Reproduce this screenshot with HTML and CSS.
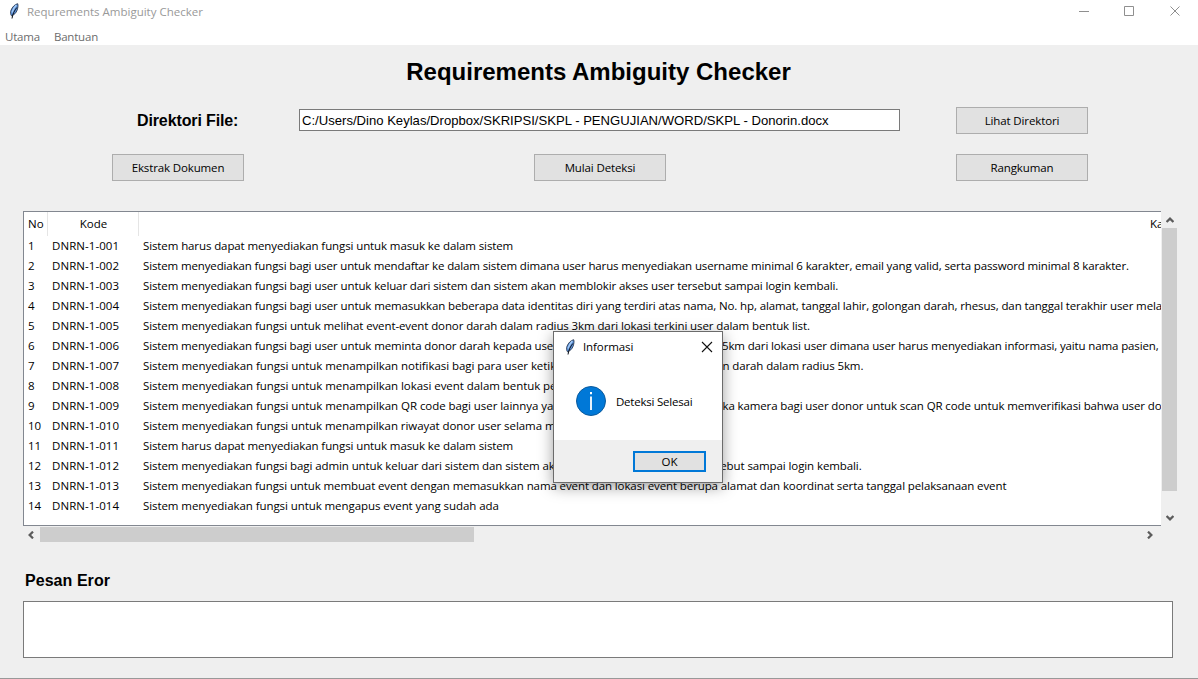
FILE: index.html
```html
<!DOCTYPE html>
<html lang="id">
<head>
<meta charset="utf-8">
<title>Requrements Ambiguity Checker</title>
<link rel="stylesheet" href="styles.css">
</head>
<body>
<svg width="0" height="0" class="defs"><defs>
  <symbol id="feather" viewBox="0 0 10 16">
    <path d="M8.7.7C6 1.200 3.200 4 2 7.300 1.300 9.500 1.500 11.500 2.500 12.800 5 12 7.200 10 8.200 7 9 4.500 9.300 2.300 8.700.7Z" fill="#5b92dc" stroke="#1c2a40" stroke-width=".8"/>
    <path d="M7.300 2C5.200 4.500 3.700 7 3 9.500" fill="none" stroke="#a8cdf7" stroke-width="1.300"/>
    <path d="M7.800 4.500C5.600 7.500 3.700 10.500 3 15.500" fill="none" stroke="#0b0f16" stroke-width="1"/>
  </symbol>
  <symbol id="chevron" viewBox="0 0 8 6"><path d="M.6 5 4 1.600 7.400 5" fill="none" stroke="#5c5c5c" stroke-width="2.200"/></symbol>
</defs></svg>
<div class="window">
  <header class="titlebar">
    <svg class="app-icon" width="10" height="16"><use href="#feather"/></svg>
    <span class="app-title">Requrements Ambiguity Checker</span>
    <svg class="controls" width="104" height="12" viewBox="0 0 104 12" fill="none" stroke="#8f8f8f"><path d="M0 6.500H10M45.500 1.500h9v9h-9zM91.500 1.500l9 9M100.500 1.500l-9 9"/></svg>
  </header>
  <nav class="menubar"><span>Utama</span><span>Bantuan</span></nav>
  <main class="content">
    <h1>Requirements Ambiguity Checker</h1>
    <div class="file-row">
      <label>Direktori File:</label>
      <div class="path"><span>C:/Users/Dino Keylas/Dropbox/SKRIPSI/SKPL - PENGUJIAN/WORD/SKPL - Donorin.docx</span></div>
      <div class="button">Lihat Direktori</div>
    </div>
    <div class="actions">
      <div class="button">Ekstrak Dokumen</div>
      <div class="button">Mulai Deteksi</div>
      <div class="button">Rangkuman</div>
    </div>
    <div class="grid-wrap">
      <div class="table">
        <div class="head"><span class="h-no">No</span><span class="h-kode">Kode</span><span class="h-text">Kalimat</span></div>
        <div class="row"><span>1</span><span>DNRN-1-001</span><span class="r1">Sistem harus dapat menyediakan fungsi untuk masuk ke dalam sistem</span></div>
        <div class="row"><span>2</span><span>DNRN-1-002</span><span class="r2">Sistem menyediakan fungsi bagi user untuk mendaftar ke dalam sistem dimana user harus menyediakan username minimal 6 karakter, email yang valid, serta password minimal 8 karakter.</span></div>
        <div class="row"><span>3</span><span>DNRN-1-003</span><span class="r3">Sistem menyediakan fungsi bagi user untuk keluar dari sistem dan sistem akan memblokir akses user tersebut sampai login kembali.</span></div>
        <div class="row"><span>4</span><span>DNRN-1-004</span><span class="r4">Sistem menyediakan fungsi bagi user untuk memasukkan beberapa data identitas diri yang terdiri atas nama, No. hp, alamat, tanggal lahir, golongan darah, rhesus, dan tanggal terakhir user melakukan</span></div>
        <div class="row"><span>5</span><span>DNRN-1-005</span><span class="r5">Sistem menyediakan fungsi untuk melihat event-event donor darah dalam radius 3km dari lokasi terkini user dalam bentuk list.</span></div>
        <div class="row"><span>6</span><span>DNRN-1-006</span><span class="r6"><span class="lead">Sistem menyediakan fungsi bagi user untuk meminta donor darah kepada user</span><span>5km dari lokasi user dimana user harus menyediakan informasi, yaitu nama pasien,</span></span></div>
        <div class="row"><span>7</span><span>DNRN-1-007</span><span class="r7"><span class="lead">Sistem menyediakan fungsi untuk menampilkan notifikasi bagi para user ketika</span><span>n darah dalam radius 5km.</span></span></div>
        <div class="row"><span>8</span><span>DNRN-1-008</span><span class="r8">Sistem menyediakan fungsi untuk menampilkan lokasi event dalam bentuk peta</span></div>
        <div class="row"><span>9</span><span>DNRN-1-009</span><span class="r9"><span class="lead">Sistem menyediakan fungsi untuk menampilkan QR code bagi user lainnya yang</span><span>ka kamera bagi user donor untuk scan QR code untuk memverifikasi bahwa user donor</span></span></div>
        <div class="row"><span>10</span><span>DNRN-1-010</span><span class="r10">Sistem menyediakan fungsi untuk menampilkan riwayat donor user selama menjadi</span></div>
        <div class="row"><span>11</span><span>DNRN-1-011</span><span class="r11">Sistem harus dapat menyediakan fungsi untuk masuk ke dalam sistem</span></div>
        <div class="row"><span>12</span><span>DNRN-1-012</span><span class="r12">Sistem menyediakan fungsi bagi admin untuk keluar dari sistem dan sistem akan memblokir akses admin tersebut sampai login kembali.</span></div>
        <div class="row"><span>13</span><span>DNRN-1-013</span><span class="r13">Sistem menyediakan fungsi untuk membuat event dengan memasukkan nama event dan lokasi event berupa alamat dan koordinat serta tanggal pelaksanaan event</span></div>
        <div class="row"><span>14</span><span>DNRN-1-014</span><span class="r14">Sistem menyediakan fungsi untuk mengapus event yang sudah ada</span></div>
      </div>
      <div class="vscroll">
        <svg class="up" width="8" height="6"><use href="#chevron"/></svg>
        <div class="vthumb"></div>
        <svg class="down" width="8" height="6"><use href="#chevron"/></svg>
      </div>
    </div>
    <div class="hscroll">
      <svg class="left" width="8" height="6"><use href="#chevron"/></svg>
      <div class="hthumb"></div>
      <svg class="right" width="8" height="6"><use href="#chevron"/></svg>
    </div>
    <h2>Pesan Eror</h2>
    <div class="errors"></div>
  </main>
</div>
<div class="dialog">
  <div class="d-title">
    <svg width="10" height="16"><use href="#feather"/></svg>
    <span>Informasi</span>
    <svg class="d-close" width="12" height="12" viewBox="0 0 12 12"><path d="M1 1l10 10M11 1 1 11" stroke="#111" stroke-width="1.100"/></svg>
  </div>
  <div class="d-body">
    <svg width="30" height="30" viewBox="0 0 30 30"><circle cx="15" cy="15" r="14.500" fill="#0078d7" stroke="#0c5a9c"/><path d="M14 6h2v2.300h-2zM14.100 10.500h1.800V24h-1.800z" fill="#fff"/></svg>
    <span>Deteksi Selesai</span>
  </div>
  <div class="d-foot"><div class="ok">OK</div></div>
</div>
</body>
</html>
```
FILE: styles.css
```css
* { box-sizing: border-box; }
body { margin: 0; width: 1198px; height: 679px; overflow: hidden; background: #efefef; color: #000; font: 11.5px/20px "Open Sans", "Noto Sans", sans-serif; white-space: nowrap; }
svg { display: block; flex: none; }
.defs { position: absolute; }
.window { width: 1198px; height: 679px; border-bottom: 1px solid #999; display: flex; flex-direction: column; }
.titlebar { height: 24px; flex: none; background: #fff; display: flex; align-items: center; padding: 0 15px 1px 9px; color: #999; }
.app-icon { margin-top: -1px; }
.app-title { margin: 1px 0 0 8px; }
.controls { margin: -2px 0 0 auto; }
.menubar { height: 21px; flex: none; background: #fff; display: flex; gap: 14px; padding: 3px 5px 0; color: #6d6d6d; letter-spacing: -.2px; }
.content { flex: 1; display: flex; flex-direction: column; }
h1 { margin: 11px 0 0; padding-right: 1px; text-align: center; font: bold 24px/32px "Liberation Sans", Arial, sans-serif; }
.file-row { height: 27px; margin-top: 19px; display: flex; align-items: center; padding-left: 137px; }
label { width: 162px; font: bold 16px/20px "Liberation Sans", Arial, sans-serif; letter-spacing: -.12px; }
.path { width: 601px; height: 22px; margin: -1px 56px 0 0; border: 1px solid #7a7a7a; background: #fff; padding-left: 2px; font: 13.1px/21px "Liberation Sans", Arial, sans-serif; }
.button { width: 132px; height: 27px; border: 1px solid #adadad; background: #e1e1e1; text-align: center; line-height: 25px; letter-spacing: -.13px; }
.actions { display: flex; justify-content: space-between; margin-top: 20px; padding: 0 110px 0 112px; }
.grid-wrap { display: flex; margin: 30px 0 0 23px; height: 315px; }
.table { width: 1138px; height: 315px; border: 1px solid #828790; border-right: 0; background: #fff; overflow: hidden; }
.head { height: 24px; display: flex; line-height: 24px; }
.head span { flex: none; }
.h-no { width: 24px; padding-left: 4px; border-right: 1px solid #e5e5e5; }
.h-kode { width: 91px; padding-left: 1px; text-align: center; border-right: 1px solid #e5e5e5; }
.h-text { margin-left: 1011px; }
.row { height: 20px; display: grid; grid-template-columns: 24px 91px 1fr; padding-left: 4px; letter-spacing: -.12px; }
.row > span:nth-child(2) { letter-spacing: .07px; }
.row .r1, .row .r11, .row .r5, .row .r13 { letter-spacing: -.106px; }
.row .r2 { letter-spacing: -.13px; }
.row .r8 { letter-spacing: -.055px; }
.row .r10 { letter-spacing: -.06px; }
.row .r12 { letter-spacing: -.097px; }
.row .r14 { letter-spacing: -.075px; }
.row .r6 { letter-spacing: -.135px; }
.lead { display: inline-block; overflow: hidden; height: 20px; vertical-align: top; letter-spacing: -.12px; }
.r6 .lead { width: 579px; }
.r7 .lead, .r9 .lead { width: 579.5px; letter-spacing: -.055px; }
.vscroll { width: 15px; margin-left: 1px; display: flex; flex-direction: column; align-items: center; padding: 6px 0 5px; }
.vthumb { width: 15px; height: 263px; margin-top: 5px; background: #cdcdcd; }
.down { margin-top: auto; transform: rotate(180deg); }
.hscroll { display: flex; align-items: center; height: 15px; margin: 1px 0 0 23px; width: 1138px; padding: 0 7px 0 4px; }
.left { transform: rotate(-90deg); }
.right { margin-left: auto; transform: rotate(90deg); }
.hthumb { width: 434px; height: 15px; margin-left: 5px; background: #cdcdcd; }
h2 { margin: 29px 0 0 25px; font: bold 16px/20px "Liberation Sans", Arial, sans-serif; letter-spacing: .05px; }
.errors { margin: 10px 0 0 23px; width: 1150px; height: 57px; border: 1px solid #7a7a7a; background: #fff; }
.dialog { position: absolute; left: 553px; top: 331px; width: 170px; height: 152px; border: 1px solid #6b6b6b; background: #fff; box-shadow: 0 4px 14px rgba(0,0,0,.38); display: flex; flex-direction: column; }
.d-title { height: 29px; display: flex; align-items: center; padding: 0 9px 0 11px; }
.d-title span { margin: 1px 0 0 8px; letter-spacing: -.1px; }
.d-close { margin-left: auto; }
.d-body { height: 79px; display: flex; align-items: center; padding: 1px 0 0 22px; gap: 10px; letter-spacing: -.22px; }
.d-body span { margin-top: 2px; }
.d-foot { flex: 1; background: #efefef; padding: 11px 16px 0 0; }
.ok { width: 73px; height: 21px; margin-left: auto; border: 2px solid #0078d7; background: #e1e1e1; text-align: center; line-height: 18px; }
```
